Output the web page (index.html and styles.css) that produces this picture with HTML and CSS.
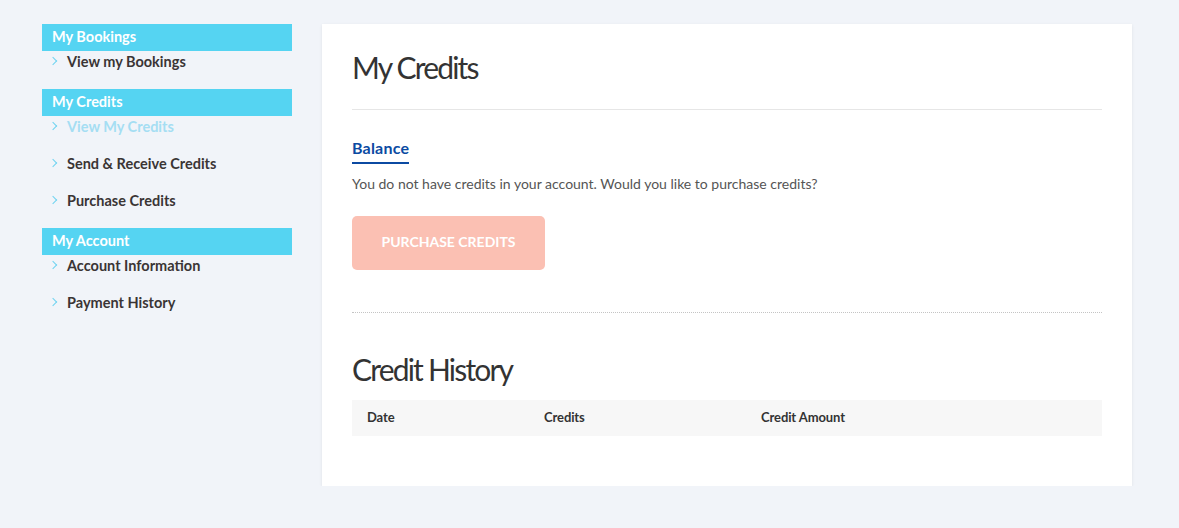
FILE: index.html
```html
<!DOCTYPE html>
<html lang="en">
<head>
<meta charset="utf-8">
<title>My Credits</title>
<link rel="stylesheet" href="styles.css">
</head>
<body>
<div class="page">
  <aside class="sidebar">
    <div class="group">
      <div class="group-title">My Bookings</div>
      <a class="item" href="#">View my Bookings</a>
    </div>
    <div class="group">
      <div class="group-title">My Credits</div>
      <a class="item active" href="#">View My Credits</a>
      <a class="item" href="#">Send &amp; Receive Credits</a>
      <a class="item" href="#">Purchase Credits</a>
    </div>
    <div class="group">
      <div class="group-title">My Account</div>
      <a class="item" href="#">Account Information</a>
      <a class="item" href="#">Payment History</a>
    </div>
  </aside>
  <main class="card">
    <h1 class="title">My Credits</h1>
    <hr class="rule">
    <h2 class="subtitle"><span>Balance</span></h2>
    <p class="message">You do not have credits in your account. Would you like to purchase credits?</p>
    <button class="btn" type="button">PURCHASE CREDITS</button>
    <hr class="dotted">
    <h1 class="title history">Credit History</h1>
    <div class="table-head">
      <div class="col c1">Date</div>
      <div class="col c2">Credits</div>
      <div class="col c3">Credit Amount</div>
    </div>
  </main>
</div>
</body>
</html>
```

FILE: styles.css
```css
* { box-sizing: border-box; }
html, body { margin: 0; padding: 0; }
body {
  background: #f1f4f9;
  font-family: "Lato", "Open Sans", "Liberation Sans", sans-serif;
  color: #3a3535;
}
.page {
  display: flex;
  align-items: flex-start;
  padding: 24px 0 0 42px;
  gap: 30px;
}
.sidebar {
  width: 250px;
  display: flex;
  flex-direction: column;
  gap: 16px;
}
.group { display: flex; flex-direction: column; }
.group-title {
  background: #55d4f2;
  color: #fff;
  font-weight: 700;
  font-size: 14.5px;
  height: 27px;
  line-height: 26px;
  padding-left: 10px;
}
.item {
  display: flex;
  align-items: center;
  height: 22px;
  margin-bottom: 15px;
  padding-left: 25px;
  padding-bottom: 2px;
  position: relative;
  color: #3a3535;
  font-weight: 700;
  font-size: 14.5px;
  text-decoration: none;
}
.item:last-child { margin-bottom: 0; }
.item::before {
  content: "";
  position: absolute;
  left: 8px;
  top: 7px;
  width: 5px;
  height: 5px;
  border-top: 1.5px solid #6fd3f0;
  border-right: 1.5px solid #6fd3f0;
  transform: rotate(45deg);
}
.item.active { color: #a5def3; }
.card {
  width: 810px;
  background: #fff;
  padding: 24px 30px 50px;
  box-shadow: 0 1px 3px rgba(0, 0, 0, 0.08);
}
.title {
  margin: 0;
  font-weight: 400;
  font-size: 30px;
  line-height: 38px;
  color: #333;
  letter-spacing: -1.8px;
}
.rule {
  border: 0;
  border-top: 1px solid #e6e6e6;
  margin: 23px 0 28px;
}
.subtitle {
  margin: 0;
  font-size: 16px;
  font-weight: 700;
  color: #0b4aa2;
  line-height: 20px;
}
.subtitle span {
  display: inline-block;
  padding-bottom: 4px;
  border-bottom: 2px solid #0b4aa2;
  letter-spacing: 0.2px;
}
.message {
  margin: 10px 0 0;
  font-size: 14px;
  line-height: 20px;
  color: #555;
}
.btn {
  display: block;
  margin-top: 22px;
  width: 193px;
  height: 54px;
  padding: 0 0 3px;
  border: 0;
  border-radius: 5px;
  background: #fbc0b3;
  color: #fff;
  font-family: inherit;
  font-size: 14px;
  font-weight: 700;
  letter-spacing: 0;
}
.dotted {
  border: 0;
  border-top: 1px dotted #c4c4c4;
  margin: 42px 0 0;
}
.history { margin-top: 37px; }
.table-head {
  margin-top: 12px;
  display: grid;
  grid-template-columns: 177px 217px 1fr;
  background: #f7f7f7;
  height: 36px;
  padding-bottom: 3px;
  align-items: center;
}
.col {
  padding-left: 15px;
  font-size: 13px;
  font-weight: 700;
  color: #333;
  letter-spacing: -0.1px;
}
```
